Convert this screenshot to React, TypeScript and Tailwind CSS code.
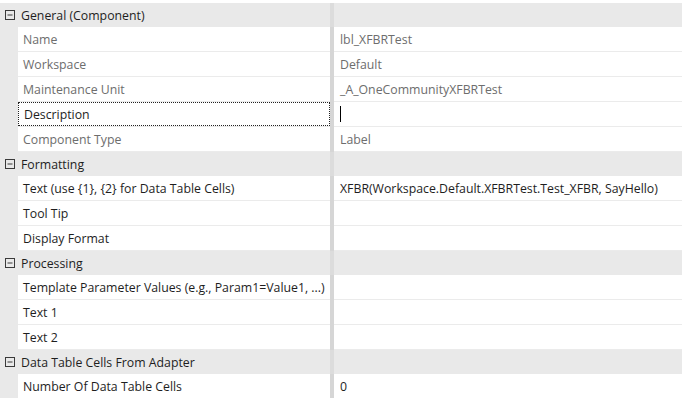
import React from "react";

type Row =
  | { kind: "header"; label: string }
  | { kind: "row"; label: string; value?: string; dim?: boolean; focus?: boolean; cursor?: boolean };

const rows: Row[] = [
  { kind: "header", label: "General (Component)" },
  { kind: "row", label: "Name", value: "lbl_XFBRTest", dim: true },
  { kind: "row", label: "Workspace", value: "Default", dim: true },
  { kind: "row", label: "Maintenance Unit", value: "_A_OneCommunityXFBRTest", dim: true },
  { kind: "row", label: "Description", focus: true, cursor: true },
  { kind: "row", label: "Component Type", value: "Label", dim: true },
  { kind: "header", label: "Formatting" },
  { kind: "row", label: "Text (use {1}, {2} for Data Table Cells)", value: "XFBR(Workspace.Default.XFBRTest.Test_XFBR, SayHello)" },
  { kind: "row", label: "Tool Tip" },
  { kind: "row", label: "Display Format" },
  { kind: "header", label: "Processing" },
  { kind: "row", label: "Template Parameter Values (e.g., Param1=Value1, ...)" },
  { kind: "row", label: "Text 1" },
  { kind: "row", label: "Text 2" },
  { kind: "header", label: "Data Table Cells From Adapter" },
  { kind: "row", label: "Number Of Data Table Cells", value: "0" },
];

function Minus() {
  return (
    <svg width="11" height="11" viewBox="0 0 11 11" className="block">
      <rect x="0.5" y="0.5" width="9" height="9" fill="none" stroke="#3a3a3a" strokeWidth="1" />
      <line x1="2.5" y1="5" x2="7.5" y2="5" stroke="#3a3a3a" strokeWidth="1" />
    </svg>
  );
}

export default function App() {
  return (
    <div
      className="w-[682px] h-[398px] overflow-hidden bg-white pt-[3px] text-[12.3px] leading-none"
      style={{ fontFamily: '"Open Sans", "Noto Sans", sans-serif' }}
    >
      {rows.map((r, i) =>
        r.kind === "header" ? (
          <div key={i} className="flex h-[24px] bg-[#e9e9e9]">
            <div className="flex w-[330px] items-center">
              <div className="flex w-[18px] justify-center pl-[3px] pt-[1px]">
                <Minus />
              </div>
              <span className="pl-[3px] pt-[3px] text-[#1e1e1e]">{r.label}</span>
            </div>
            <div className="w-[4px] bg-[#dcdcdc]" />
            <div className="flex-1" />
          </div>
        ) : (
          <div key={i} className="flex h-[25px]">
            <div className="w-[18px] bg-[#e9e9e9]" />
            <div className="flex w-[312px] border-b border-[#ebebeb]">
              <div
                className={
                  "flex flex-1 items-center pl-[5px] pt-[3px] " +
                  (r.focus ? "border border-dotted border-[#222] pl-[4px] " : "") +
                  (r.dim ? "text-[#6d6d6d]" : "text-[#1e1e1e]")
                }
              >
                {r.label}
              </div>
            </div>
            <div className="w-[4px] bg-[#d6d6d6]" />
            <div
              className={
                "flex flex-1 items-center border-b border-[#ebebeb] pl-[6px] " +
                (r.cursor ? "" : "pt-[3px] ") +
                (r.dim ? "text-[#6d6d6d]" : "text-[#1e1e1e]")
              }
            >
              {r.cursor ? <div className="h-[16px] w-[1px] bg-black" /> : r.value}
            </div>
          </div>
        )
      )}
    </div>
  );
}
